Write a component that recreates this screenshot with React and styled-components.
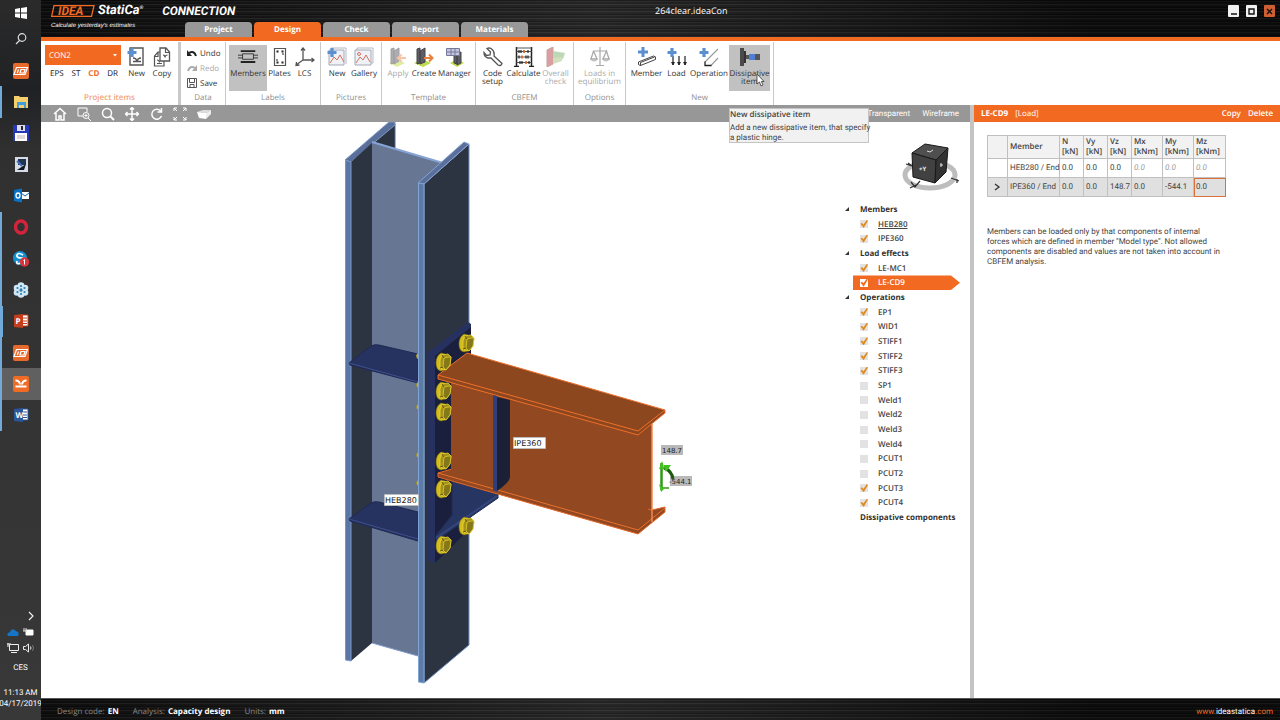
import React from "react";
import styled, { createGlobalStyle } from "styled-components";

const orange = "#f26a21";
const sans = '"Open Sans", "Noto Sans", sans-serif';
const compact = 'Roboto, "Open Sans", sans-serif';
const brushed = `linear-gradient(90deg, rgba(0,0,0,.45), rgba(70,70,70,.3) 45%, rgba(0,0,0,.5) 85%),
  repeating-linear-gradient(180deg, #0e0e0e 0 1px, #262626 1px 2px, #151515 2px 4px, #303030 4px 5px, #1a1a1a 5px 7px)`;

const Global = createGlobalStyle`
  * { box-sizing: border-box; }
  body { margin: 0; font-family: ${sans}; font-size: 8px; color: #333; background: #fff; text-rendering: geometricPrecision; }
  button, select, input { font: inherit; color: inherit; margin: 0; padding: 0; border: 0; background: none; text-rendering: inherit; }
  svg { display: block; flex: none; }
  a { color: inherit; text-decoration: none; }
`;

const Desktop = styled.div`
  display: flex;
  min-height: 100vh;
`;

/* ---------- task bar ---------- */
const Taskbar = styled.nav`
  width: 41px;
  flex: none;
  display: flex;
  flex-direction: column;
  background: linear-gradient(#2b2b2b, #202124 90px, #303030 150px, #383838);
  color: #fff;
`;
const TaskButton = styled.button`
  height: 26px;
  display: flex;
  align-items: center;
  justify-content: center;
  border-left: ${(p) => p.$bar || 0}px solid #71a9d8;
  padding-left: ${(p) => 3 - (p.$bar || 0)}px;
  padding-right: 2px;
  background: ${(p) => (p.$active ? "#606060" : "none")};
`;
const PinnedApps = styled.div`
  display: grid;
  grid-auto-rows: 1fr;
  height: 376px;
  margin-top: 3px;
  ${TaskButton} { height: auto; }
`;
const Tray = styled.div`
  margin-top: auto;
  padding-bottom: 11px;
  display: flex;
  flex-direction: column;
  align-items: center;
  font-family: ${compact};
  font-size: 8px;
  line-height: 11px;
  white-space: nowrap;
`;
const TrayRow = styled.div`
  display: flex;
  gap: 4px;
  height: 16px;
  align-items: center;
  justify-content: ${(p) => (p.$end ? "flex-end" : "center")};
  align-self: stretch;
  padding: 0 6px;
`;
const Language = styled.span`
  padding: 6px 0 14px;
`;
const Clock = styled.time`
  text-align: center;
`;

/* ---------- application frame ---------- */
const AppFrame = styled.div`
  flex: 1;
  min-width: 0;
  display: flex;
  flex-direction: column;
`;
const Header = styled.header`
  height: 41px;
  display: flex;
  background: ${brushed};
  border-bottom: 4px solid ${orange};
  color: #fff;
`;
const Brand = styled.div`
  width: 144px;
  flex: none;
  padding: 4px 0 0 10px;
  white-space: nowrap;
`;
const Tagline = styled.div`
  font: italic 6px/10px "Liberation Sans", sans-serif;
  margin-top: 3px;
`;
const BrandRow = styled.div`
  display: flex;
  align-items: center;
  gap: 3px;
  height: 14px;
  font: italic bold 13px/14px Roboto, sans-serif;
`;
const Product = styled.span`
  font-size: 12px;
  margin-left: 16px;
`;
const Reg = styled.sup`
  font-size: 5px;
  line-height: 5px;
`;
const Tabs = styled.div`
  display: flex;
  gap: 2px;
  align-items: flex-end;
`;
const Tab = styled.button`
  width: 67px;
  height: 15px;
  border-radius: 4px 4px 0 0;
  background: ${(p) => (p.$active ? orange : "#989898")};
  color: #fff;
  font-weight: 700;
`;
const FileTitle = styled.div`
  flex: 1;
  padding: 5px 0 0 127px;
  font-size: 9px;
  line-height: 12px;
`;
const WindowButtons = styled.div`
  display: flex;
  gap: 7px;
  padding: 5px 5px 0 0;
`;
const WindowButton = styled.button`
  width: 11px;
  height: 12px;
  display: grid;
  place-items: center;
  border-radius: 1px;
  background: ${(p) => (p.$close ? "#cf5e30" : "#f2f2f2")};
`;

/* ---------- ribbon ---------- */
const Ribbon = styled.div`
  height: 64px;
  display: flex;
  background: #fff;
`;
const Group = styled.section`
  display: flex;
  flex-direction: column;
  justify-content: space-between;
  margin: 1px 0 0;
  padding: 3px 3px 1px;
  border-right: ${(p) => (p.$thick ? 3 : 1)}px solid #c9c9c9;
`;
const GroupItems = styled.div`
  display: flex;
  align-items: flex-start;
`;
const GroupTitle = styled.h2`
  margin: 0;
  font-size: 8px;
  line-height: 12px;
  font-weight: ${(p) => (p.$warm ? 600 : 400)};
  text-align: center;
  color: ${(p) => (p.$warm ? "#f3a377" : "#8f8f8f")};
`;
const RibbonButton = styled.button`
  position: relative;
  width: ${(p) => p.$w}px;
  height: 46px;
  display: flex;
  flex-direction: column;
  align-items: center;
  padding-top: 2px;
  background: ${(p) => (p.$pressed ? "#c1c1c1" : "none")};
  color: ${(p) => (p.disabled ? "#aaa" : "#333")};
  line-height: 8px;
  font-size: 8px;
  svg { opacity: ${(p) => (p.disabled ? 0.5 : 1)}; }
`;
const ButtonText = styled.span`
  margin-top: 3px;
  white-space: pre;
  text-align: center;
`;
const Picker = styled.div`
  width: 76px;
  margin: 0 3px 0 1px;
`;
const SelectWrap = styled.div`
  display: flex;
  align-items: center;
  height: 20px;
  padding-right: 3px;
  background: ${orange};
  color: #fff;
  select { flex: 1; height: 20px; padding-left: 4px; appearance: none; }
  option { color: #333; }
`;
const CodeRow = styled.div`
  display: flex;
  justify-content: space-between;
  padding: 4px 3px 0 5px;
`;
const CodeButton = styled.button`
  line-height: 10px;
  color: ${(p) => (p.$active ? orange : "#111")};
  font-weight: ${(p) => (p.$active ? 700 : 400)};
`;
const DataList = styled.div`
  width: 38px;
  display: flex;
  flex-direction: column;
  gap: 1px;
  padding-top: 1px;
`;
const DataButton = styled.button`
  display: flex;
  align-items: center;
  gap: 3px;
  padding-left: 3px;
  height: 14px;
  white-space: nowrap;
  color: ${(p) => (p.disabled ? "#aaa" : "#333")};
`;
const Tooltip = styled.div`
  position: absolute;
  z-index: 3;
  left: 0;
  top: 63px;
  width: 140px;
  height: 35px;
  padding-top: 1px;
  background: #f1f1f1;
  border: 1px solid #c4c4c4;
  color: #444;
  text-align: left;
  font-family: ${compact};
  font-size: 8px;
  line-height: 10px;
  white-space: pre;
`;
const TooltipTitle = styled.strong`
  display: block;
  padding-bottom: 3px;
  font-family: ${sans};
  font-weight: 600;
`;
const Pointer = styled.svg`
  position: absolute;
  left: 27px;
  top: 28px;
  z-index: 2;
`;

/* ---------- workspace ---------- */
const Workspace = styled.main`
  flex: 1;
  display: flex;
  min-height: 0;
`;
const ViewColumn = styled.div`
  flex: 1;
  min-width: 0;
  display: flex;
  flex-direction: column;
  border-right: 4px solid #c4c4c4;
`;
const ViewToolbar = styled.div`
  height: 17px;
  flex: none;
  display: flex;
  align-items: center;
  gap: 8px;
  padding: 0 11px;
  background: #979797;
  color: #fff;
`;
const ToolButton = styled.button`
  width: 16px;
  height: 16px;
  display: grid;
  place-items: center;
`;
const ViewModes = styled.div`
  margin-left: auto;
  display: flex;
  gap: 12px;
  font-family: ${compact};
  line-height: 16px;
`;
const Viewport = styled.div`
  flex: 1;
  display: flex;
  align-items: flex-start;
`;
const SceneBox = styled.div`
  flex: 1;
  min-width: 0;
  svg { width: 100%; height: auto; }
  text { font-family: "DejaVu Sans", sans-serif; font-size: 8px; fill: #222; }
`;
const ForceText = styled.g`
  text { font-size: 7px; }
`;
const Side = styled.aside`
  width: 128px;
  flex: none;
  padding-top: 16px;
`;
const CubeBox = styled.div`
  padding: 0 8px 8px 58px;
`;
const Tree = styled.ul`
  list-style: none;
  margin: 0;
  padding: 0;
  height: 323px;
  display: grid;
  grid-auto-rows: 1fr;
  font-weight: 600;
`;
const TreeHead = styled.li`
  display: flex;
  align-items: center;
  gap: 9px;
  padding-left: 2px;
  font-weight: 700;
  white-space: nowrap;
`;
const TreeItem = styled.li`
  display: flex;
  align-items: center;
  margin: 0 10px 0 11px;
  background: ${(p) => (p.$selected ? orange : "none")};
  color: ${(p) => (p.$selected ? "#fff" : "#444")};
  clip-path: polygon(0 0, calc(100% - 9px) 0, 100% 50%, calc(100% - 9px) 100%, 0 100%);
  label { text-decoration: ${(p) => (p.$underline ? "underline" : "none")}; }
`;
const Check = styled.input`
  appearance: none;
  width: 8px;
  height: 8px;
  margin: 0 10px 0 7px;
  background: ${(p) => (p.$selected ? "#fff" : "#e2e2e2")};
  &:checked::after {
    content: "";
    display: block;
    width: 8px;
    height: 8px;
    background: ${(p) => (p.$selected ? orange : "#e08a1e")};
    clip-path: polygon(6% 48%, 26% 38%, 42% 58%, 84% 0, 100% 8%, 46% 100%);
  }
`;

/* ---------- properties ---------- */
const Properties = styled.aside`
  width: 306px;
  flex: none;
`;
const PanelHeader = styled.div`
  height: 17px;
  display: flex;
  align-items: center;
  gap: 7px;
  padding: 0 7px;
  background: ${orange};
  color: #fff;
`;
const PanelAction = styled.button`
  font-weight: 600;
  margin-left: ${(p) => (p.$first ? "auto" : "0")};
`;
const PanelBody = styled.div`
  padding: 13px 40px 0 13px;
  color: #444;
  font-family: ${compact};
`;
const LoadTable = styled.table`
  border-collapse: collapse;
  table-layout: fixed;
  width: 238px;
  border: 1px solid #b8b8b8;
  th, td {
    border: 1px solid #c0c0c0;
    height: 19px;
    padding: 0 0 0 2px;
    text-align: left;
    white-space: nowrap;
    line-height: 10px;
  }
  th { height: 23px; background: #f2f2f2; font-weight: 600; font-family: ${sans}; }
`;
const LoadRow = styled.tr`
  background: ${(p) => (p.$current ? "#e0e0e0" : "#fff")};
`;
const Cell = styled.td`
  color: ${(p) => (p.$off ? "#999" : "#444")};
  font-style: ${(p) => (p.$off ? "italic" : "normal")};
  outline: ${(p) => (p.$focus ? "1px solid #d9713c" : "none")};
  outline-offset: -1px;
`;
const Note = styled.p`
  margin: 30px 0 0;
  line-height: 10px;
  white-space: pre-line;
`;

/* ---------- status bar ---------- */
const StatusBar = styled.footer`
  height: 22px;
  display: flex;
  align-items: center;
  gap: 14px;
  padding: 3px 7px 0 16px;
  background: ${brushed};
  border-top: 1px solid #555;
  color: #8a8a8a;
  b { color: #fff; margin-left: 1px; }
`;
const SiteLink = styled.a`
  margin-left: auto;
  font-family: ${compact};
  color: ${orange};
  span { color: #fff; }
`;

/* ---------- icons ---------- */
const Svg = ({ w = 20, h = 20, box, children }) => (
  <svg width={w} height={h} viewBox={box || `0 0 ${w} ${h}`} fill="none" stroke="#555" strokeWidth="1">
    {children}
  </svg>
);
const Plus = () => <path d="M5 1v9M0.5 5.5h9" stroke="#5b8fd0" strokeWidth="3.2" />;
const icons = {
  newItem: (
    <Svg><path d="M3 1h13v17H3z" strokeWidth="1.400" /><path d="M6 11q3.500 0 3.500 3M14 11q-3.500 0-3.500 3M6 14.500h8" strokeWidth="1.300" /><Plus /></Svg>
  ),
  copy: (
    <Svg><path d="M8 14V1h6l3.500 4v9z" strokeWidth="1.300" /><path d="M8 5H6L2.500 9v10H12v-5M13.500 1v4.500H18M2.500 9.500H6V5M5 13q2.500 0 2.500 2.500M11 8q2 0 2 2.500Q13 8 15.500 8M5 16.500h5" strokeWidth="1.200" /></Svg>
  ),
  members: (
    <Svg box="0 0 22 22"><path d="M3 4.500h16M3 16.500h16" stroke="#222" strokeWidth="2" /><path d="M5 7.500h12v6H5zM0 9h5M0 12h5M17 9h5M17 12h5" stroke="#333" /></Svg>
  ),
  plates: (
    <Svg><path d="M4.500 1.500h11v17h-11z" strokeWidth="1.200" /><path d="M6.500 4.500h2M11.500 4.500h2M6.500 15.500h2M11.500 15.500h2M6.500 13h1M12.500 7h1" stroke="#222" strokeWidth="1.800" /></Svg>
  ),
  lcs: (
    <Svg><path d="M8 1v12h11M8 13l-7 5M6 3.500L8 1l2 2.500M16.500 11l2.500 2-2.500 2M1.500 15L1 18.500l3.500-.500" strokeWidth="1.300" /></Svg>
  ),
  pictureNew: (
    <Svg><path d="M4 1h15v16" stroke="#b4b8c4" /><path d="M2 3h15v15H2z" stroke="#a4a8b6" fill="#eef1f6" /><path d="M3 16l4-6 3 3 3-5 4 7" stroke="#d9705c" /><Plus /></Svg>
  ),
  gallery: (
    <Svg><path d="M3 3V1h16v15h-2" stroke="#b4b8c4" /><path d="M1 3h16v15H1z" stroke="#a4a8b6" fill="#eef1f6" /><path d="M2 16l4-6 3 3 3-5 4 7" stroke="#d9705c" /><circle cx="5" cy="7" r="1.500" stroke="#d9705c" /></Svg>
  ),
  apply: (
    <Svg><path d="M1 16l8-4 8 4-8 4z" fill="#bedb4b" stroke="none" /><path d="M3 2l3-1v15l-3 1zM6 4l5-3v13l-5 3z" fill="#5d5d68" stroke="#444" /><path d="M10 11h8M13.500 7.500L10 11l3.500 3.500" stroke="#f08a4e" strokeWidth="2" /></Svg>
  ),
  create: (
    <Svg><path d="M0 16l8-4 9 4-8 4z" fill="#bedb4b" stroke="none" /><path d="M3 2l3-1v15l-3 1zM6 4l5-3v14l-5 2z" fill="#5d5d68" stroke="#444" /><path d="M10 11h8M15 7.500l3.500 3.500-3.500 3.500" stroke="#e87f3a" strokeWidth="2" /></Svg>
  ),
  manager: (
    <Svg><path d="M5 16l7-4 7 4-7 4z" fill="#bedb4b" stroke="none" /><path d="M9 6l3-1v12l-3-1zM12 6l4-1v11l-4 2z" fill="#5d5d68" stroke="#444" /><path d="M1.500 1.500h13v7h-13zM1.500 5h13M6 1v8M10 1v8" fill="#c4c6df" stroke="#76789a" /></Svg>
  ),
  wrench: (
    <Svg><path d="M4 1.500L7.500 5 7 8 3.500 8.500 1 5.500Q1 10 5 11l3 0 7 7q3 1.500 4-1.500L11 9q1-5-3-7.500-2-1-4 0z" strokeWidth="1.300" /></Svg>
  ),
  abacus: (
    <Svg><path d="M2.500 0v20M17.500 0v20M0 19.500h5M15 19.500h5" stroke="#222" strokeWidth="1.500" /><path d="M2 1h16M2 4.500h16M2 10h16M2 15.500h16" stroke="#444" strokeWidth=".9" /><path d="M5 3v3M7 3v3M14 3v3M5 8.500v3M12 8.500v3M14 8.500v3M6 14v3M8 14v3M15 14v3" stroke="#222" strokeWidth="1.200" /><path d="M10 3v3M8 8.500v3M12 14v3" stroke="#d66a32" strokeWidth="1.800" /></Svg>
  ),
  overall: (
    <Svg><path d="M1 3l6-3v17l-6 3z" fill="#b93e4d" stroke="#943" /><path d="M7 4l12 2-2 6-10-1z" fill="#7eb36b" stroke="none" /><path d="M7 11l9-1v4l-9 3z" fill="#a6c17c" stroke="none" /></Svg>
  ),
  scales: (
    <Svg><path d="M10 0v18M6 18.500h8M3 4h14M3.500 4L1 12h6L3.500 4M16.500 4L13 12h6z" strokeWidth="1.200" /><path d="M0.500 12q3.500 4 7 0zM12.500 12q3.500 4 7 0z" /></Svg>
  ),
  member: (
    <Svg><path d="M1.500 15l15-6q3 0 2 3.500l-15 6q-3 0-2-3.500zM3.500 15.500l14-5.500M3.500 18.500v-3" stroke="#444" /><path d="M6 0v10M1 5h10" stroke="#5b8fd0" strokeWidth="3" /></Svg>
  ),
  load: (
    <Svg><path d="M6 9v9M12 9v9M18 9v9" stroke="#222" strokeWidth="1.200" /><path d="M4.500 15l1.500 3 1.500-3M10.500 15l1.500 3 1.500-3M16.500 15l1.500 3 1.500-3" fill="#222" stroke="#222" strokeWidth=".8" /><Plus /></Svg>
  ),
  operation: (
    <Svg><path d="M19 2L6 15M19 11l-7 7.500" stroke="#999" strokeWidth="1.100" /><path d="M6 14.500v4h6.500" stroke="#222" strokeWidth="1.300" /><Plus /></Svg>
  ),
  dissipative: (
    <Svg><path d="M0 1h4v18H0z" fill="#4a4a4a" stroke="none" /><path d="M4 4h2v12H4z" fill="#333" stroke="none" /><path d="M6 8h4v4H6zM14 7h6v6h-6z" fill="#555" stroke="none" /><path d="M9 7h6v6H9z" fill="#4f7fd6" stroke="none" /></Svg>
  ),
  undo: <Svg w={10} h={10}><path d="M2 5q5-3 7 3" stroke="#222" strokeWidth="2" /><path d="M0 2v6h5z" fill="#222" stroke="none" /></Svg>,
  redo: <Svg w={10} h={10}><path d="M8 5Q3 2 1 8" stroke="#aaa" strokeWidth="2" /><path d="M10 2v6H5z" fill="#aaa" stroke="none" /></Svg>,
  save: <Svg w={10} h={10}><path d="M.500 .500h9v9h-9zM2.500 .500v4h5v-4M3 9.500v-3h4v3" /></Svg>,
};

const viewIcons = [
  ["Home", <path d="M1 7l6-5.500L13 7M3 6v7h3V9h2v4h3V6" />],
  ["Zoom window", <g strokeWidth="1"><path d="M6 9H1V1h9v4" /><circle cx="9" cy="8.500" r="3" /><path d="M11 11l3 3M7.500 8.500h3M9 7v3" /></g>],
  ["Zoom", <g><circle cx="6" cy="6" r="4.500" /><path d="M9.500 9.500L13 13" strokeWidth="2" /></g>],
  ["Pan", <path d="M7 0.500v13M0.500 7h13M5 2.500l2-2 2 2M5 11.500l2 2 2-2M2.500 5l-2 2 2 2M11.500 5l2 2-2 2" />],
  ["Rotate", <path d="M12 4.500A5 5 0 1 0 12.500 9M12.500 1v4H8.500" />],
  ["Fit", <path strokeWidth="1" d="M1 4V1h3M1 1l3 3M10 1h3v3M13 1l-3 3M1 10v3h3M1 13l3-3M10 13h3v-3M13 13l-3-3" />],
  ["Solid view", <g stroke="none"><path d="M0 5l6-2 8-0-5 3z" fill="#ddd" /><path d="M0 5l9 1v6l-7-1z" fill="#fff" /><path d="M9 6l5-3v4l-5 5z" fill="#eee" /></g>],
];

const IdeaTile = () => (
  <svg width="16" height="16" viewBox="0 0 16 16"><rect width="16" height="16" rx="2" fill="#e66a2c" /><path d="M3.500 4.500h11L12 11.500H1zM5.500 6.500L4.300 10M8 6.500h4l-1 3.500H7z" fill="none" stroke="#fff" strokeWidth="1.200" /></svg>
);
const TextTile = ({ color, letter }) => (
  <svg width="16" height="16" viewBox="0 0 16 16">
    <path d="M8 2h7v11H8z" fill="#fff" stroke={color} /><path d="M10 5h4M10 8h4M10 10.500h4" stroke={color} />
    <path d="M1 2l9-1v14l-9-1z" fill={color} />
    <text x="2.500" y="11" fill="#fff" fontSize="8" fontWeight="700" fontFamily="Open Sans">{letter}</text>
  </svg>
);

const pinned = [
  ["IDEA StatiCa", 0, <IdeaTile />],
  ["Explorer", 2, <svg width="14" height="13"><path d="M0 1h5l1 1h8v11H0z" fill="#f4cf6c" /><path d="M3 7h9v6h-2v-3H5v3H3z" fill="#3f9edb" /></svg>],
  ["Commander", 0, <svg width="16" height="16"><path d="M0 0h16v16H0z" fill="#2438b8" /><path d="M4 0h8v6H4z" fill="#dde" /><path d="M8 1h2v4H8z" fill="#223" /><path d="M2 8h12v8H2z" fill="#fff" /><path d="M4 11h8M4 13h8" stroke="#c9b0b0" /></svg>],
  ["Remote", 0, <svg width="13" height="15"><path d="M0 0h13v15H0z" fill="#d6dbe6" /><path d="M3 2h8v6H3z" fill="#20344f" /><path d="M2 13l9-6-2 6z" fill="#101820" /><path d="M2 4l5 5" stroke="#3f73bb" strokeWidth="2" /></svg>],
  ["Outlook", 0, <svg width="16" height="15"><path d="M8 4h8v7H8z" fill="#fff" /><path d="M8 5l4 3 4-3" stroke="#0a66b8" fill="none" /><path d="M1 2l8-1.500v14L1 13z" fill="#0a72c4" /><ellipse cx="5" cy="7.500" rx="2" ry="2.500" fill="none" stroke="#fff" strokeWidth="1.300" /></svg>],
  ["Opera", 2, <svg width="16" height="16"><ellipse cx="8" cy="8" rx="5.500" ry="6" fill="none" stroke="#d3243c" strokeWidth="3.400" /><path d="M5 8q0-5 4-6.500Q5 3 5 8t4 6.500Q5 13 5 8z" fill="#8f1022" /></svg>],
  ["Skype", 2, <svg width="18" height="17"><circle cx="8" cy="8" r="7" fill="#1391cf" /><path d="M11 5q-5-3-6 0t5 3 0 4-5-1" stroke="#fff" strokeWidth="1.700" fill="none" /><circle cx="12.500" cy="12" r="4.700" fill="#d8343c" /><path d="M11.500 10.500l1-1v5" stroke="#fff" fill="none" /></svg>],
  ["Meeting", 2, <svg width="16" height="16"><g fill="#cfe6f4"><circle cx="8" cy="3.500" r="3.300" /><circle cx="12" cy="6" r="3.300" /><circle cx="12" cy="10.500" r="3.300" /><circle cx="8" cy="12.500" r="3.300" /><circle cx="4" cy="10.500" r="3.300" /><circle cx="4" cy="6" r="3.300" /></g><g fill="#2b7fae"><circle cx="8" cy="8" r="1.500" /><circle cx="8" cy="4" r="1.100" /><circle cx="11.500" cy="6" r="1.100" /><circle cx="11.500" cy="10" r="1.100" /><circle cx="8" cy="12" r="1.100" /><circle cx="4.500" cy="10" r="1.100" /><circle cx="4.500" cy="6" r="1.100" /></g></svg>],
  ["PowerPoint", 3, <TextTile color="#c43e1c" letter="P" />],
  ["IDEA StatiCa 2", 2, <IdeaTile />],
  ["Connection", 2, <svg width="16" height="16"><rect width="16" height="16" rx="2" fill="#ee6c26" /><path d="M2.500 4.500q4 0 4.500 4M13.500 4.500q-4 0-4.500 4M2.500 10.500h11" stroke="#fff" strokeWidth="2" fill="none" /></svg>, true],
  ["Word", 2, <TextTile color="#2b579a" letter="W" />],
];

/* ---------- model drawing ---------- */
const Bolt = ({ x, y }) => (
  <g transform={`translate(${x} ${y})`} strokeLinejoin="round">
    <path d="M-2-9Q-7-6-7 1-7 8-2 9L2 8V-8z" fill="#d3bc1e" stroke="#7d7013" strokeWidth=".6" />
    <path d="M-3-2L-1-7 5-8 8-5 7 3 3 8-3 6z" fill="#a39119" stroke="#e9d235" strokeWidth=".8" />
    <path d="M1-4L5-5 8-5 7 3 3 8 0 5z" fill="#857818" stroke="#e3cd30" strokeWidth=".8" />
    <path d="M-1-7L1-4M-3 6L0 5" stroke="#4f470c" strokeWidth=".8" fill="none" />
  </g>
);
const Scene = () => (
  <svg viewBox="41 122 801 576" role="img" aria-label="Connection model">
    <g strokeLinejoin="round" strokeWidth="1">
      <path d="M372 142L395 124V150L372 143z" fill="#2d3441" stroke="#4f6690" />
      <path d="M345 160L389 122H395V125L351 162z" fill="#5b6f9b" stroke="#7c97c4" />
      <path d="M351 162L372 143V643L351 661z" fill="#2d3441" />
      <path d="M345.500 160L351 162V661L345.500 660z" fill="#5c76a3" stroke="#7897c8" />
      <path d="M372 142L443 163 418 184V656L372 643z" fill="#667693" />
      <path d="M372 142L443 163" stroke="#86a3d6" strokeWidth="2" />
      <path d="M372 643L418 656" stroke="#7f9ccb" />
      <path d="M349 363L371 346Q374 344 379 345L418 354V383L350 365z" fill="#26325f" stroke="#202a54" />
      <path d="M349 363L418 382" stroke="#3d4f8c" />
      <path d="M349 519L371 503Q374 501 379 502L418 512V541L350 521z" fill="#26325f" stroke="#202a54" />
      <path d="M349 519L418 539" stroke="#3d4f8c" />
      {[356, 385, 407, 455, 483].map((y) => <path key={y} d={`M419 ${y - 4}q-5 4 0 8z`} fill="#d2bd20" stroke="#9a8b1c" />)}
      <path d="M424 184L469 144V645L424 683z" fill="#2d3441" stroke="#7090c4" />
      <path d="M418 183L464 142 469 144 424 184z" fill="#5b6f9b" stroke="#86a3d6" />
      <path d="M418.500 183L424 184V683L418.500 682z" fill="#5c7ba7" stroke="#80a3d4" />
      <path d="M427 353L468 322 471 324V527L435 563 427 560z" fill="#26315f" />
      <path d="M435 356L471 327V528L435 563z" fill="#191f3c" />
      <path d="M452 478L498 492V498L436 541V535L452 515z" fill="#273562" stroke="#202a54" />
      <path d="M436 538L497 496" stroke="#34467e" strokeWidth="2" />
      <path d="M451 378L652 424V522L451 476z" fill="#924820" />
      <path d="M438 473L452 469 652 510 665 507V512L638 534 438 477z" fill="#924820" stroke="#e3672a" />
      <path d="M438 473L638 530 665 508" fill="none" stroke="#e8702f" />
      <path d="M451 474V380H454L648 420V516z" fill="#924820" />
      <path d="M438 375L467 353 665 410V413L638 435 438 379z" fill="#8d471f" stroke="#ee6f2b" />
      <path d="M438 375L638 431 665 410" fill="none" stroke="#ee6f2b" />
      <path d="M652 424V522" stroke="#f58a4e" strokeWidth="1.500" />
      <path d="M497 397L510 400V477Q510 482 497 491z" fill="#1b2036" />
      <path d="M493 395L497 396V492L493 490z" fill="#2f3f7a" />
    </g>
    <Bolt x="466" y="343" /><Bolt x="443" y="362" /><Bolt x="443" y="391" /><Bolt x="443" y="412" />
    <Bolt x="443" y="461" /><Bolt x="443" y="489" /><Bolt x="466" y="526" /><Bolt x="443" y="545" />
    <g fill="#fff" stroke="#bbb" strokeWidth="1"><path d="M384.500 494.500h34v11h-34zM513.500 437.500h32v11h-32z" /></g>
    <text x="385" y="503">HEB280</text>
    <text x="514" y="446">IPE360</text>
    <path d="M661 445h22v10h-22zM670 476h22v10h-22z" fill="#b9b9b9" />
    <g fill="none" stroke="#2f9a12"><path d="M661.500 463v27" strokeWidth="2.500" /><path d="M664 468q8 3 9 11" stroke="#1d5c10" strokeWidth="3" /><path d="M661 488h8" strokeWidth="1.500" /></g>
    <path d="M662 461l-3 8h6zM663 465l8 0-5 7zM659 484l2 8 3-3z" fill="#3fc01a" />
    <ForceText><text x="662" y="453">148.7</text><text x="669" y="484">-544.1</text></ForceText>
  </svg>
);
const Cube = () => (
  <svg width="62" height="56" viewBox="900 138 62 56">
    <ellipse cx="930" cy="175" rx="25" ry="13" fill="none" stroke="#bdbdbd" strokeWidth="5" />
    <path d="M910 188l8-4M911 182l4 5 5-6M906 164l6 2-4-3M951 178l8 3M957 179v4" stroke="#333" strokeWidth="1.300" fill="none" />
    <g stroke="#181818" strokeLinejoin="round"><path d="M912 153L925 144 948 148 936 160z" fill="#4f4f4f" /><path d="M912 153L936 160 935 183 913 177z" fill="#414141" /><path d="M936 160L948 148 946 172 935 183z" fill="#333" /></g>
    <text x="919" y="171" fontSize="6" fontWeight="700" fill="#eee" fontFamily="Open Sans">+Y</text>
    <path d="M927 151l3 1 3-2M941 163v4M943 165h-3" stroke="#ddd" fill="none" />
  </svg>
);

const ribbonGroups = [
  ["Labels", [["Members", 38, "members", { $pressed: true }], ["Plates", 25, "plates"], ["LCS", 25, "lcs"]]],
  ["Pictures", [["New", 26, "pictureNew"], ["Gallery", 28, "gallery"]]],
  ["Template", [["Apply", 26, "apply", { disabled: true }], ["Create", 26, "create"], ["Manager", 35, "manager"]]],
  ["CBFEM", [["Code\nsetup", 27, "wrench"], ["Calculate", 35, "abacus"], ["Overall\ncheck", 29, "overall", { disabled: true }]]],
  ["Options", [["Loads in\nequilibrium", 45, "scales", { disabled: true }]]],
  ["New", [["Member", 35, "member"], ["Load", 25, "load"], ["Operation", 40, "operation"], ["Dissipative\nitem", 41, "dissipative", { $pressed: true }]]],
];
const RibbonItem = ({ text, width, icon, flags, children }) => (
  <RibbonButton $w={width} {...flags}>
    {icons[icon]}
    <ButtonText>{text}</ButtonText>
    {children}
  </RibbonButton>
);

const tree = [
  ["Members", [["HEB280", 1], ["IPE360", 1]]],
  ["Load effects", [["LE-MC1", 1], ["LE-CD9", 1]]],
  ["Operations", [["EP1", 1], ["WID1", 1], ["STIFF1", 1], ["STIFF2", 1], ["STIFF3", 1], ["SP1", 0], ["Weld1", 0], ["Weld2", 0], ["Weld3", 0], ["Weld4", 0], ["PCUT1", 0], ["PCUT2", 0], ["PCUT3", 1], ["PCUT4", 1]]],
];
const columns = [["N", "kN"], ["Vy", "kN"], ["Vz", "kN"], ["Mx", "kNm"], ["My", "kNm"], ["Mz", "kNm"]];
const colWidths = [20, 52, 24, 24, 24, 31, 31, 32];

export default function App() {
  return (
    <Desktop>
      <Global />
      <Taskbar aria-label="Task bar">
        <TaskButton aria-label="Start">
          <svg width="12" height="12" fill="#fff"><path d="M0 2l5-1v4.500H0zM6 1l6-1v5.500H6zM0 6.500h5V11l-5-1zM6 6.500h6V12l-6-1z" /></svg>
        </TaskButton>
        <TaskButton aria-label="Search">
          <svg width="12" height="12" fill="none" stroke="#ddd" strokeWidth="1.200"><circle cx="7" cy="4.500" r="3.800" /><path d="M4.500 7.500L1 11" /></svg>
        </TaskButton>
        <PinnedApps>
          {pinned.map(([name, bar, icon, active]) => (
            <TaskButton key={name} aria-label={name} $bar={bar} $active={active}>{icon}</TaskButton>
          ))}
        </PinnedApps>
        <Tray>
          <TrayRow $end><svg width="8" height="10" fill="none" stroke="#eee" strokeWidth="1.200"><path d="M2 1l4 4-4 4" /></svg></TrayRow>
          <TrayRow>
            <svg width="12" height="8"><path d="M1 8q-2-3 2-4 2-5 6-1 4 1 2 5z" fill="#1674c4" /></svg>
            <svg width="11" height="8"><path d="M3 2h7v5H3z" fill="#fff" stroke="#fff" /><path d="M1 0v3M3 0v3M0 3h4" stroke="#ddd" /></svg>
          </TrayRow>
          <TrayRow>
            <svg width="12" height="10" fill="none" stroke="#eee"><path d="M2.500 1.500h9v6h-9zM4 9.500h6M0 1h4M1 0v4" /></svg>
            <svg width="11" height="10" fill="none" stroke="#eee"><path d="M.500 3.500h2l3-2.500v8l-3-2.500h-2zM7.500 3.500q1 1.500 0 3" /><path d="M9.500 2q2 3 0 6" stroke="#777" /></svg>
          </TrayRow>
          <Language>CES</Language>
          <Clock>11:13 AM<br />04/17/2019</Clock>
        </Tray>
      </Taskbar>

      <AppFrame>
        <Header>
          <Brand>
            <BrandRow>
              <svg width="44" height="12" viewBox="0 0 44 12">
                <path d="M3 .700h40L40.500 11.300H.700z" fill="none" stroke={orange} strokeWidth="1.300" />
                <text x="7" y="10" fill={orange} fontFamily="Roboto" fontWeight="700" fontStyle="italic" fontSize="12">IDEA</text>
              </svg>
              <span>StatiCa<Reg>®</Reg></span>
              <Product>CONNECTION</Product>
            </BrandRow>
            <Tagline>Calculate yesterday's estimates</Tagline>
          </Brand>
          <Tabs>
            {["Project", "Design", "Check", "Report", "Materials"].map((t) => <Tab key={t} $active={t === "Design"}>{t}</Tab>)}
          </Tabs>
          <FileTitle>264clear.ideaCon</FileTitle>
          <WindowButtons>
            <WindowButton aria-label="Minimize"><svg width="7" height="7"><path d="M1 6h6" stroke="#111" strokeWidth="1.500" /></svg></WindowButton>
            <WindowButton aria-label="Maximize"><svg width="7" height="7"><path d="M1 1h5v5H1z" stroke="#111" fill="none" strokeWidth="1.400" /></svg></WindowButton>
            <WindowButton aria-label="Close" $close><svg width="7" height="7"><path d="M1 1l5 5M6 1L1 6" stroke="#111" strokeWidth="1.400" /></svg></WindowButton>
          </WindowButtons>
        </Header>

        <Ribbon>
          <Group $thick>
            <GroupItems>
              <Picker>
                <SelectWrap>
                  <select aria-label="Project item" defaultValue="CON2"><option>CON2</option></select>
                  <svg width="5" height="3"><path d="M0 0h4L2 2.500z" fill="#fff" /></svg>
                </SelectWrap>
                <CodeRow>
                  {["EPS", "ST", "CD", "DR"].map((c) => <CodeButton key={c} $active={c === "CD"}>{c}</CodeButton>)}
                </CodeRow>
              </Picker>
              <RibbonItem text="New" width={25} icon="newItem" />
              <RibbonItem text="Copy" width={26} icon="copy" />
            </GroupItems>
            <GroupTitle $warm>Project items</GroupTitle>
          </Group>
          <Group>
            <DataList>
              <DataButton>{icons.undo}Undo</DataButton>
              <DataButton disabled>{icons.redo}Redo</DataButton>
              <DataButton>{icons.save}Save</DataButton>
            </DataList>
            <GroupTitle>Data</GroupTitle>
          </Group>
          {ribbonGroups.map(([title, items]) => (
            <Group key={title}>
              <GroupItems>
                {items.map(([text, width, icon, flags]) => (
                  <RibbonItem key={text} text={text} width={width} icon={icon} flags={flags}>
                    {icon === "dissipative" && (
                      <>
                        <Pointer width="9" height="14" viewBox="0 0 9 14"><path d="M1 1v10l2.500-2 1.500 4 2-1-1.700-3.500H8z" fill="#fff" stroke="#333" strokeWidth=".8" /></Pointer>
                        <Tooltip role="tooltip">
                          <TooltipTitle>New dissipative item</TooltipTitle>
                          {"Add a new dissipative item, that specify\na plastic hinge."}
                        </Tooltip>
                      </>
                    )}
                  </RibbonItem>
                ))}
              </GroupItems>
              <GroupTitle>{title}</GroupTitle>
            </Group>
          ))}
        </Ribbon>

        <Workspace>
          <ViewColumn>
            <ViewToolbar>
              {viewIcons.map(([name, art]) => (
                <ToolButton key={name} aria-label={name}>
                  <svg width="14" height="14" fill="none" stroke="#fff" strokeWidth="1.500">{art}</svg>
                </ToolButton>
              ))}
              <ViewModes><button>Transparent</button><button>Wireframe</button></ViewModes>
            </ViewToolbar>
            <Viewport>
              <SceneBox><Scene /></SceneBox>
              <Side>
                <CubeBox><Cube /></CubeBox>
                <Tree>
                  {tree.map(([head, items]) => (
                    <React.Fragment key={head}>
                      <TreeHead><svg width="7" height="6"><path d="M5 1v4H1z" fill="#333" /></svg>{head}</TreeHead>
                      {items.map(([name, on]) => (
                        <TreeItem key={name} $selected={name === "LE-CD9"} $underline={name === "HEB280"}>
                          <Check type="checkbox" id={name} defaultChecked={!!on} $selected={name === "LE-CD9"} />
                          <label htmlFor={name}>{name}</label>
                        </TreeItem>
                      ))}
                    </React.Fragment>
                  ))}
                  <TreeHead><svg width="7" height="6" />Dissipative components</TreeHead>
                </Tree>
              </Side>
            </Viewport>
          </ViewColumn>

          <Properties>
            <PanelHeader>
              <b>LE-CD9</b><span>[Load]</span>
              <PanelAction $first>Copy</PanelAction><PanelAction>Delete</PanelAction>
            </PanelHeader>
            <PanelBody>
              <LoadTable>
                <colgroup>{colWidths.map((w, i) => <col key={i} width={w} />)}</colgroup>
                <thead>
                  <tr><th /><th>Member</th>{columns.map(([n, u]) => <th key={n}>{n}<br />[{u}]</th>)}</tr>
                </thead>
                <tbody>
                  <LoadRow>
                    <td /><Cell>HEB280 / End</Cell><Cell>0.0</Cell><Cell>0.0</Cell><Cell>0.0</Cell><Cell $off>0.0</Cell><Cell $off>0.0</Cell><Cell $off>0.0</Cell>
                  </LoadRow>
                  <LoadRow $current>
                    <td><svg width="14" height="8" fill="none" stroke="#333" strokeWidth="1.300"><path d="M5 1l4 3-4 3" /></svg></td>
                    <Cell>IPE360 / End</Cell><Cell>0.0</Cell><Cell>0.0</Cell><Cell>148.7</Cell><Cell>0.0</Cell><Cell>-544.1</Cell><Cell $focus>0.0</Cell>
                  </LoadRow>
                </tbody>
              </LoadTable>
              <Note>{'Members can be loaded only by that components of internal\nforces which are defined in member "Model type". Not allowed\ncomponents are disabled and values are not taken into account in\nCBFEM analysis.'}</Note>
            </PanelBody>
          </Properties>
        </Workspace>

        <StatusBar>
          <span>Design code: <b>EN</b></span>
          <span>Analysis: <b>Capacity design</b></span>
          <span>Units: <b>mm</b></span>
          <SiteLink href="#site">www.<span>ideastatica</span>.com</SiteLink>
        </StatusBar>
      </AppFrame>
    </Desktop>
  );
}
